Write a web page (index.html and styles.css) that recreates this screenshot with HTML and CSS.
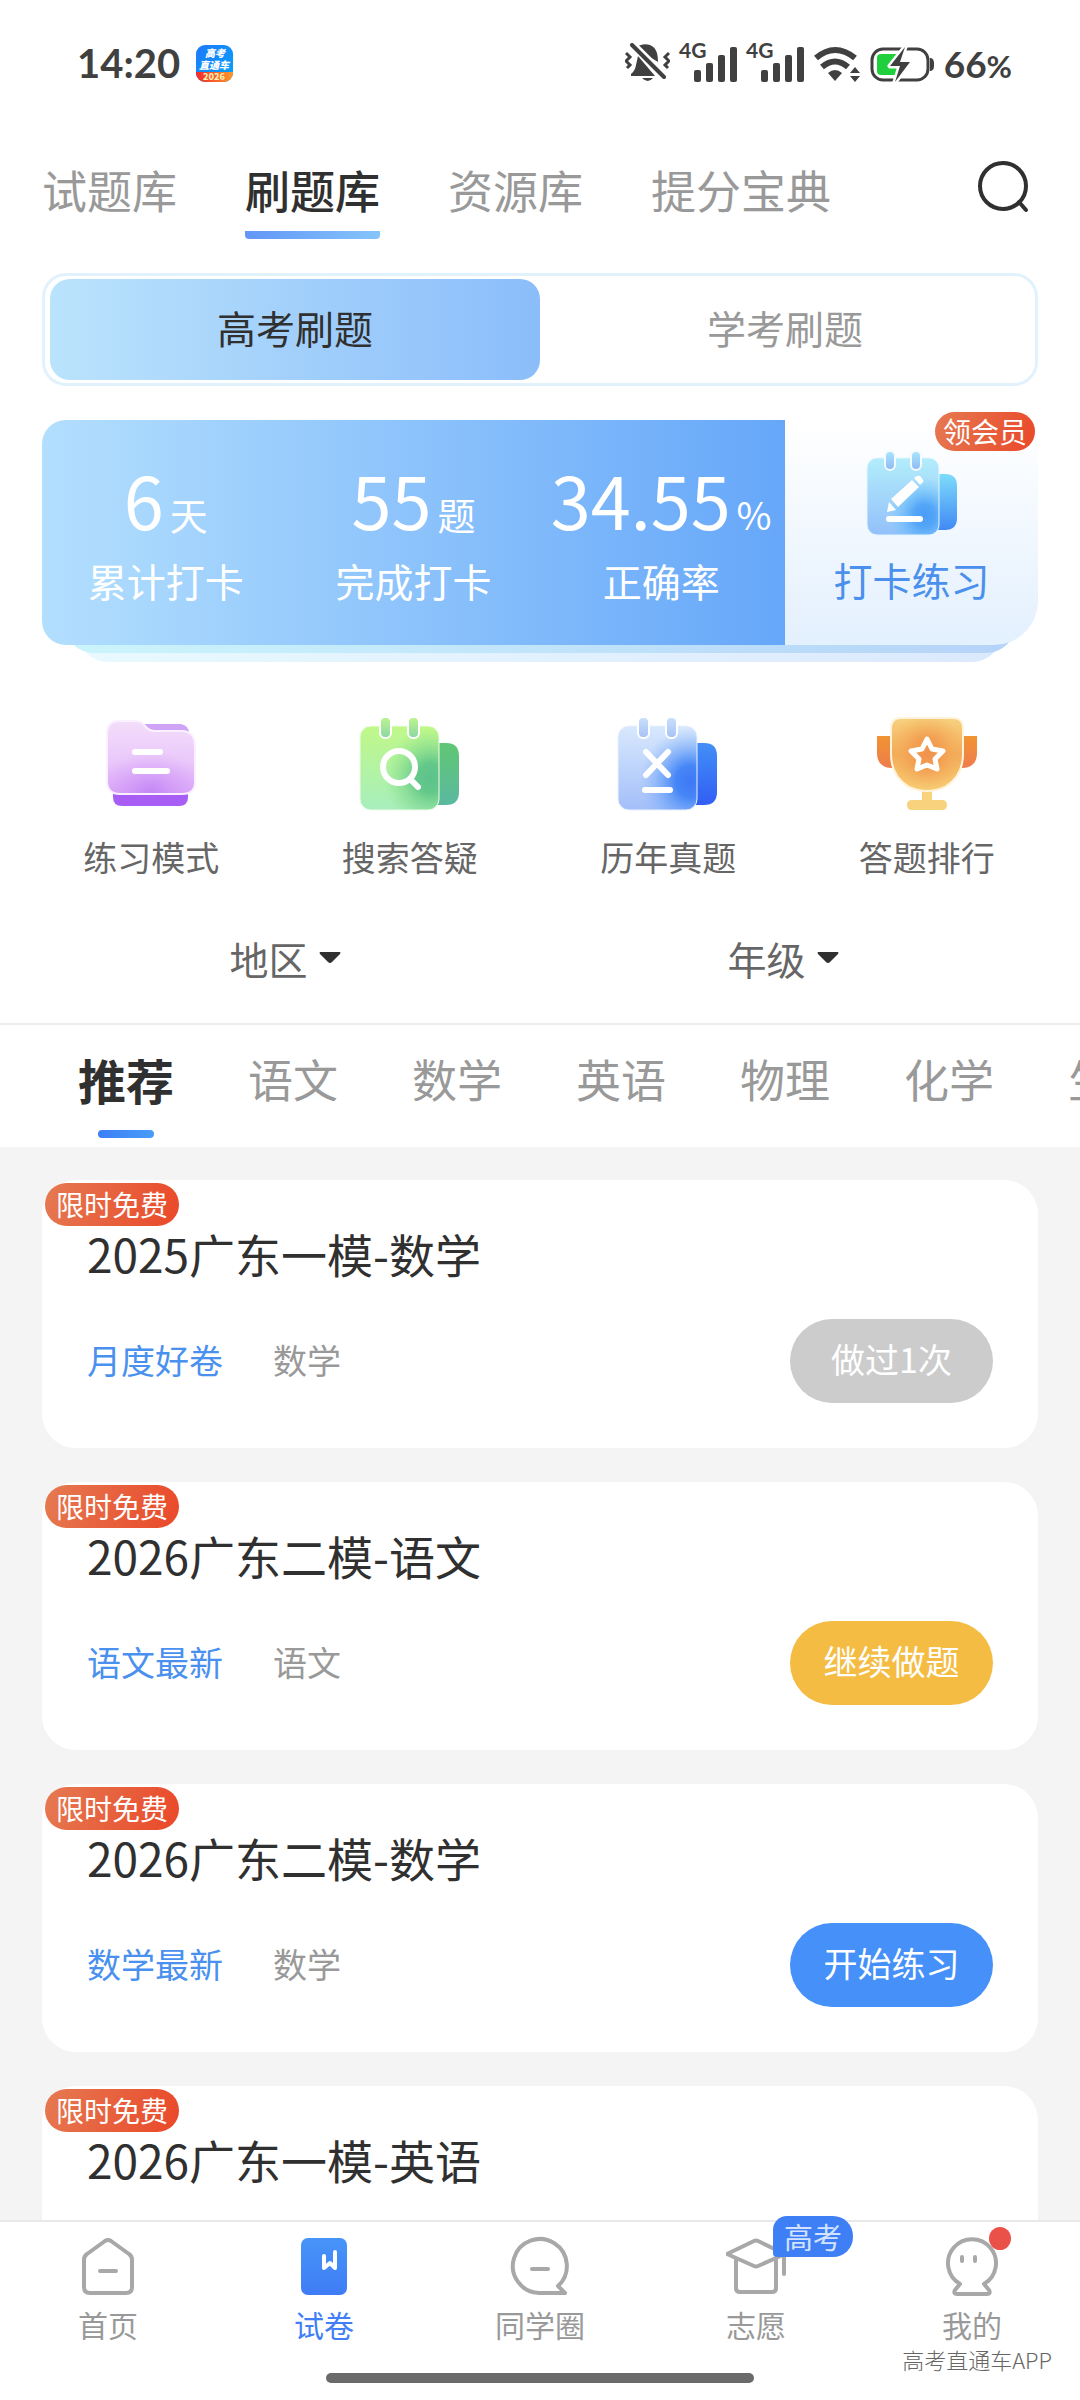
FILE: index.html
```html
<!DOCTYPE html>
<html lang="zh-CN">

<head>
    <meta charset="UTF-8">
    <meta name="viewport" content="width=device-width, initial-scale=1.0">
    <title>高考直通车</title>
    <link rel="stylesheet" href="styles.css">
</head>

<body>
    <div class="status-bar">
        <div class="status-left">
            <span class="clock">14:20</span>
            <svg class="app-logo" width="37" height="37" viewBox="0 0 37 37">
                <defs>
                    <linearGradient id="logoBlue" x1="0" y1="0" x2="1" y2="1">
                        <stop offset="0" stop-color="#1f78fb" />
                        <stop offset="1" stop-color="#04a4fb" />
                    </linearGradient>
                    <linearGradient id="logoRed">
                        <stop offset="0" stop-color="#f5282c" />
                        <stop offset="1" stop-color="#fb9a2a" />
                    </linearGradient>
                    <clipPath id="logoClip"><rect width="37" height="37" rx="9" /></clipPath>
                </defs>
                <g clip-path="url(#logoClip)">
                    <rect width="37" height="37" fill="url(#logoBlue)" />
                    <rect y="27" width="37" height="10" fill="url(#logoRed)" />
                </g>
                <g fill="#fff" font-weight="900" text-anchor="middle">
                    <text x="19" y="12" font-size="10" font-style="italic">高考</text>
                    <text x="18" y="24" font-size="10" font-style="italic">直通车</text>
                    <text x="18" y="35" font-size="9" fill="#ffeeb0">2026</text>
                </g>
            </svg>
        </div>
        <div class="status-right">
            <svg width="45" height="40" viewBox="0 0 45 40">
                <path d="M10 5C18-1 29 0 32 10q1 4 1 9zM13 13L30 33H6v-2q4-3 5-9zM17 35h11q-5 6-11 0z" fill="#404040" />
                <path d="M8 2L40 34" stroke="#fff" stroke-width="8" />
                <path d="M7 2L39 34" stroke="#404040" stroke-width="4" stroke-linecap="round" />
                <path d="M1 10l4 4-4 4 4 4-3 3M44 10l-4 4 4 4-4 4 3 3" fill="none" stroke="#404040" stroke-width="3" />
            </svg>
            <svg class="signal" width="58" height="40" viewBox="0 0 58 40">
                <text x="0" y="15" font-size="21">4G</text>
                <rect x="15" y="27" width="7" height="12" rx="2" />
                <rect x="27" y="20" width="7" height="19" rx="2" />
                <rect x="39" y="12" width="7" height="27" rx="2" />
                <rect x="51" y="4" width="7" height="35" rx="2" />
            </svg>
            <svg class="signal" width="58" height="40" viewBox="0 0 58 40">
                <text x="0" y="15" font-size="21">4G</text>
                <rect x="15" y="27" width="7" height="12" rx="2" />
                <rect x="27" y="20" width="7" height="19" rx="2" />
                <rect x="39" y="12" width="7" height="27" rx="2" />
                <rect x="51" y="4" width="7" height="35" rx="2" />
            </svg>
            <svg width="48" height="40" viewBox="0 0 48 40">
                <path d="M3 15Q22-1 42 15M9 24Q22 13 35 24" fill="none" stroke="#404040" stroke-width="6" />
                <path d="M15 30q7-6 14 0l-7 8z" fill="#404040" />
                <path d="M42 24l5 6H37zM42 39l5-6H37z" fill="#404040" />
            </svg>
            <svg width="65" height="40" viewBox="0 0 65 40">
                <rect x="2" y="6" width="56" height="31" rx="11" fill="none" stroke="#404040" stroke-width="3" />
                <path d="M11 11h16v21H11q-4 0-4-4V15q0-4 4-4z" fill="#1fd03c" />
                <path d="M60 15h1q3 1 3 5v3q0 4-3 5h-1z" fill="#404040" />
                <path d="M35 4L20 23h10l-5 16 15-20H30z" fill="#404040" stroke="#fff" stroke-width="5" stroke-linejoin="round" paint-order="stroke" />
            </svg>
            <span class="battery-level">66<small>%</small></span>
        </div>
    </div>

    <nav class="top-tabs">
        <a class="top-tab" href="#">试题库</a>
        <a class="top-tab active" href="#">刷题库</a>
        <a class="top-tab" href="#">资源库</a>
        <a class="top-tab" href="#">提分宝典</a>
        <button class="search-button" aria-label="搜索">
            <svg width="54" height="54" viewBox="0 0 54 54" fill="none" stroke="#303030" stroke-width="4" stroke-linecap="round">
                <circle cx="27" cy="26" r="23" />
                <path d="M43 42l7 8" />
            </svg>
        </button>
    </nav>

    <div class="segment">
        <button class="segment-item active">高考刷题</button>
        <button class="segment-item">学考刷题</button>
    </div>

    <section class="stats">
        <div class="stats-card">
            <div class="stats-numbers">
                <div class="stat">
                    <div class="stat-value">6<small>天</small></div>
                    <div class="stat-label">累计打卡</div>
                </div>
                <div class="stat">
                    <div class="stat-value">55<small>题</small></div>
                    <div class="stat-label">完成打卡</div>
                </div>
                <div class="stat">
                    <div class="stat-value">34.55<small>%</small></div>
                    <div class="stat-label">正确率</div>
                </div>
            </div>
            <a class="punch" href="#">
                <svg width="92" height="86" viewBox="-1 -1 92 86">
                    <defs>
                        <linearGradient id="punchBack" x1="0" y1="0" x2="0" y2="1">
                            <stop offset="0" stop-color="#7ddcfb" />
                            <stop offset="1" stop-color="#4189f5" />
                        </linearGradient>
                        <linearGradient id="punchFront" x1="0" y1="0" x2="0" y2="1">
                            <stop offset="0" stop-color="#b2edfb" />
                            <stop offset="1" stop-color="#93c0fa" />
                        </linearGradient>
                        <radialGradient id="punchGlow" cx="0.8" cy="0.75" r="0.5">
                            <stop offset="0" stop-color="#4a9cf8" />
                            <stop offset="0.3" stop-color="#54a6f8" />
                            <stop offset="1" stop-color="#72cdfb" stop-opacity="0" />
                        </radialGradient>
                        <linearGradient id="punchRing" x1="0" y1="0" x2="0" y2="1">
                            <stop offset="0" stop-color="#a9e8fb" />
                            <stop offset="1" stop-color="#8fb8f4" />
                        </linearGradient>
                    </defs>
                    <path d="M66 23h12q12 0 12 12v32q0 12-12 12H66z" fill="url(#punchBack)" />
                    <rect y="7" width="72" height="77" rx="10" fill="url(#punchFront)" />
                    <rect y="7" width="72" height="77" rx="10" fill="url(#punchGlow)" stroke="#e4f6fe" stroke-width="1" />
                    <g fill="url(#punchRing)" stroke="#f4fbff" stroke-width="2">
                        <rect x="18" y="0" width="10" height="19" rx="5" />
                        <rect x="44" y="0" width="10" height="19" rx="5" />
                    </g>
                    <path d="M20 61l2-10 7 8zM24 48L45 29l7 7-21 20zM47 27l3-2q2-1 4 1l2 3q1 2-1 3l-2 2z" fill="#fff" />
                    <path d="M22 68h31" stroke="#fff" stroke-width="6" stroke-linecap="round" />
                </svg>
                <span class="punch-label">打卡练习</span>
                <span class="badge vip-badge">领会员</span>
            </a>
        </div>
    </section>

    <nav class="features">
        <a class="feature" href="#">
            <svg width="104" height="100" viewBox="-8 -7 104 100">
                <defs>
                    <linearGradient id="folderFront" x1="0" y1="0" x2="0" y2="1">
                        <stop offset="0" stop-color="#f3def9" />
                        <stop offset="0.55" stop-color="#eac8fb" />
                        <stop offset="1" stop-color="#d9a6f8" />
                    </linearGradient>
                    <radialGradient id="folderGlow" cx="0.5" cy="1" r="0.6">
                        <stop offset="0" stop-color="#c285f6" />
                        <stop offset="1" stop-color="#d8a0f8" stop-opacity="0" />
                    </radialGradient>
                </defs>
                <path d="M36 3h38q8 2 8 9H40z" fill="#cfa4f7" />
                <path d="M6 68h75v8q0 9-9 9H15q-9 0-9-9z" fill="#a85df5" />
                <path d="M12 0h16q6 0 9 4l3 3q3 3 7 3h29q12 1 12 15v36q0 12-13 12H13Q0 73 0 60V13Q0 0 12 0z" fill="url(#folderFront)" />
                <path d="M12 0h16q6 0 9 4l3 3q3 3 7 3h29q12 1 12 15v36q0 12-13 12H13Q0 73 0 60V13Q0 0 12 0z" fill="url(#folderGlow)" stroke="#fbf0ff" stroke-width="2" />
                <path d="M28 31h25M28 50h32" stroke="#fff" stroke-width="6" stroke-linecap="round" />
            </svg>
            <span>练习模式</span>
        </a>
        <a class="feature" href="#">
            <svg width="104" height="100" viewBox="-2 -4 104 100">
                <defs>
                    <linearGradient id="searchBack" x1="0" y1="0" x2="0" y2="1">
                        <stop offset="0" stop-color="#60c673" />
                        <stop offset="1" stop-color="#5bb9a0" />
                    </linearGradient>
                    <linearGradient id="searchFront" x1="0" y1="0" x2="0" y2="1">
                        <stop offset="0" stop-color="#c0f888" />
                        <stop offset="1" stop-color="#a7eebd" />
                    </linearGradient>
                    <radialGradient id="searchGlow" cx="0.9" cy="0.62" r="0.6">
                        <stop offset="0" stop-color="#5cc28b" />
                        <stop offset="0.3" stop-color="#64c88a" />
                        <stop offset="1" stop-color="#8be088" stop-opacity="0" />
                    </radialGradient>
                    <linearGradient id="searchRing" x1="0" y1="0" x2="0" y2="1">
                        <stop offset="0" stop-color="#bdf58d" />
                        <stop offset="1" stop-color="#8bd6a5" />
                    </linearGradient>
                </defs>
                <path d="M74 25h12q13 0 13 13v36q0 13-13 13H74z" fill="url(#searchBack)" />
                <rect y="8" width="79" height="84" rx="11" fill="url(#searchFront)" />
                <rect y="8" width="79" height="84" rx="11" fill="url(#searchGlow)" stroke="#eefde6" stroke-width="1" />
                <g fill="url(#searchRing)" stroke="#fff" stroke-width="2">
                    <rect x="20" y="-1" width="11" height="21" rx="5" />
                    <rect x="48" y="-1" width="11" height="21" rx="5" />
                </g>
                <circle cx="39" cy="49" r="16" fill="none" stroke="#fff" stroke-width="6" />
                <path d="M50 61l8 8" stroke="#fff" stroke-width="6" stroke-linecap="round" />
            </svg>
            <span>搜索答疑</span>
        </a>
        <a class="feature" href="#">
            <svg width="104" height="100" viewBox="-2 -4 104 100">
                <defs>
                    <linearGradient id="examBack" x1="0" y1="0" x2="0" y2="1">
                        <stop offset="0" stop-color="#438ff7" />
                        <stop offset="1" stop-color="#315ef4" />
                    </linearGradient>
                    <linearGradient id="examFront" x1="0" y1="0" x2="0" y2="1">
                        <stop offset="0" stop-color="#d8e8fd" />
                        <stop offset="1" stop-color="#a3bff9" />
                    </linearGradient>
                    <radialGradient id="examGlow" cx="0.92" cy="0.66" r="0.64">
                        <stop offset="0" stop-color="#3f78f6" />
                        <stop offset="0.3" stop-color="#4686f7" />
                        <stop offset="1" stop-color="#7fb5fa" stop-opacity="0" />
                    </radialGradient>
                    <linearGradient id="examRing" x1="0" y1="0" x2="0" y2="1">
                        <stop offset="0" stop-color="#cbe1fc" />
                        <stop offset="1" stop-color="#a5c1f5" />
                    </linearGradient>
                </defs>
                <path d="M74 25h12q13 0 13 13v36q0 13-13 13H74z" fill="url(#examBack)" />
                <rect y="8" width="79" height="84" rx="11" fill="url(#examFront)" />
                <rect y="8" width="79" height="84" rx="11" fill="url(#examGlow)" stroke="#eaf2fe" stroke-width="1" />
                <g fill="url(#examRing)" stroke="#fff" stroke-width="2">
                    <rect x="20" y="-1" width="11" height="21" rx="5" />
                    <rect x="48" y="-1" width="11" height="21" rx="5" />
                </g>
                <path d="M28 34l22 23M50 34L28 57M27 72h25" stroke="#fff" stroke-width="6" stroke-linecap="round" />
            </svg>
            <span>历年真题</span>
        </a>
        <a class="feature" href="#">
            <svg width="104" height="100" viewBox="-2 -4 104 100">
                <defs>
                    <linearGradient id="cupHandle" x1="0" y1="0" x2="0" y2="1">
                        <stop offset="0" stop-color="#f19431" />
                        <stop offset="1" stop-color="#ee7c4d" />
                    </linearGradient>
                    <linearGradient id="cup" x1="0" y1="0" x2="0" y2="1">
                        <stop offset="0" stop-color="#f7d280" />
                        <stop offset="0.5" stop-color="#f3aa58" />
                        <stop offset="1" stop-color="#f8d279" />
                    </linearGradient>
                    <radialGradient id="cupGlow" cx="0.5" cy="0.48" r="0.55">
                        <stop offset="0" stop-color="#f0924c" />
                        <stop offset="0.4" stop-color="#f2a052" />
                        <stop offset="1" stop-color="#f5b860" stop-opacity="0" />
                    </radialGradient>
                </defs>
                <path d="M0 18h20v32h-6Q0 49 0 35zM100 18H80v32h6q14-1 14-15z" fill="url(#cupHandle)" />
                <path d="M45 70h10v12h10q5 0 5 5t-5 5H35q-5 0-5-5t5-5h10z" fill="#f8d27c" />
                <path d="M24 0h52q10 0 10 10v26q0 22-18 33-18 8-36 0Q14 58 14 36V10Q14 0 24 0z" fill="url(#cup)" />
                <path d="M24 0h52q10 0 10 10v26q0 22-18 33-18 8-36 0Q14 58 14 36V10Q14 0 24 0z" fill="url(#cupGlow)" stroke="#fff3db" stroke-width="2" />
                <path d="M50 21l5 10 11 2-8 8 2 10-10-4-10 4 2-10-8-8 11-2z" fill="none" stroke="#fff" stroke-width="5" stroke-linejoin="round" />
            </svg>
            <span>答题排行</span>
        </a>
    </nav>

    <div class="filters">
        <label class="filter">
            <select aria-label="地区"><option>地区</option></select>
            <svg width="22" height="12" viewBox="0 0 22 12"><path d="M1 0h20q1 1 0 2l-8 8q-2 2-4 0L1 2q-1-1 0-2z" fill="#303030" /></svg>
        </label>
        <label class="filter">
            <select aria-label="年级"><option>年级</option></select>
            <svg width="22" height="12" viewBox="0 0 22 12"><path d="M1 0h20q1 1 0 2l-8 8q-2 2-4 0L1 2q-1-1 0-2z" fill="#303030" /></svg>
        </label>
    </div>

    <nav class="subjects">
        <a class="subject active" href="#">推荐</a>
        <a class="subject" href="#">语文</a>
        <a class="subject" href="#">数学</a>
        <a class="subject" href="#">英语</a>
        <a class="subject" href="#">物理</a>
        <a class="subject" href="#">化学</a>
        <a class="subject" href="#">生物</a>
    </nav>

    <main class="papers">
        <article class="paper">
            <span class="badge free-badge">限时免费</span>
            <h2>2025广东一模-数学</h2>
            <div class="paper-row">
                <span class="tag">月度好卷</span>
                <span class="course">数学</span>
                <button class="paper-button done">做过1次</button>
            </div>
        </article>
        <article class="paper">
            <span class="badge free-badge">限时免费</span>
            <h2>2026广东二模-语文</h2>
            <div class="paper-row">
                <span class="tag">语文最新</span>
                <span class="course">语文</span>
                <button class="paper-button continue">继续做题</button>
            </div>
        </article>
        <article class="paper">
            <span class="badge free-badge">限时免费</span>
            <h2>2026广东二模-数学</h2>
            <div class="paper-row">
                <span class="tag">数学最新</span>
                <span class="course">数学</span>
                <button class="paper-button start">开始练习</button>
            </div>
        </article>
        <article class="paper">
            <span class="badge free-badge">限时免费</span>
            <h2>2026广东一模-英语</h2>
        </article>
    </main>

    <footer class="bottom">
        <nav class="bottom-nav">
            <a class="nav-item" href="#">
                <svg width="60" height="60" viewBox="0 0 60 60">
                    <path d="M27 5q3-2 6 0l18 13q3 2 3 6v27q0 6-6 6H12q-6 0-6-6V24q0-4 3-6zM22 35h16" />
                </svg>
                <span>首页</span>
            </a>
            <a class="nav-item active" href="#">
                <svg width="60" height="60" viewBox="0 0 60 60">
                    <defs>
                        <linearGradient id="book" x1="0" y1="0" x2="0" y2="1">
                            <stop offset="0" stop-color="#4795f8" />
                            <stop offset="1" stop-color="#3f7cf6" />
                        </linearGradient>
                    </defs>
                    <rect x="7" y="2" width="46" height="57" rx="7" fill="url(#book)" stroke="none" />
                    <path class="bookmark" d="M30 20v12l6-5 5 5V16" />
                </svg>
                <span>试卷</span>
            </a>
            <a class="nav-item" href="#">
                <svg width="60" height="60" viewBox="0 0 60 60">
                    <path d="M55 57H29A27 27 0 1 1 48 50zM22 33h16" />
                </svg>
                <span>同学圈</span>
            </a>
            <a class="nav-item" href="#">
                <svg width="60" height="60" viewBox="0 0 60 60">
                    <path d="M1 18L28 5q2-1 4 0l27 13-27 12q-2 1-4 0zM10 24v28q0 4 4 4h32q4 0 4-4V24M58 20v18" />
                </svg>
                <span>志愿</span>
                <span class="nav-badge">高考</span>
            </a>
            <a class="nav-item" href="#">
                <svg width="60" height="60" viewBox="0 0 60 60">
                    <path d="M18 48A24 24 0 1 1 42 48l5 6q2 4-2 4H15q-4 0-2-4zM20 21v4M33 21v4" />
                </svg>
                <span>我的</span>
                <span class="nav-dot"></span>
            </a>
        </nav>
        <div class="home-bar"></div>
        <div class="watermark">高考直通车APP</div>
    </footer>
</body>

</html>
```

FILE: styles.css
```css
* {
    box-sizing: border-box;
}

body {
    margin: 0;
    height: 100vh;
    display: flex;
    flex-direction: column;
    overflow: hidden;
    background: #fff;
    color: #303030;
    font-family: "Noto Sans CJK SC", sans-serif;
}

a {
    color: inherit;
    text-decoration: none;
}

button,
select {
    padding: 0;
    border: none;
    background: none;
    color: inherit;
    font-family: inherit;
}

svg {
    display: block;
    flex-shrink: 0;
}

/* Status bar */
.status-bar {
    display: flex;
    justify-content: space-between;
    align-items: center;
    height: 126px;
    padding: 0 68px 0 77px;
    font-family: Lato, sans-serif;
    font-weight: bold;
    color: #404040;
}

.status-left,
.status-right {
    display: flex;
    align-items: center;
}

.status-left {
    gap: 16px;
}

.status-right {
    gap: 9px;
}

.clock {
    font-size: 40px;
}

.app-logo {
    font-family: "Noto Sans CJK SC", sans-serif;
}

.signal {
    fill: #404040;
    overflow: visible;
}

.battery-level {
    font-size: 37px;
}

.battery-level small {
    font-size: 31px;
}

/* Top tabs */
.top-tabs {
    display: flex;
    align-items: flex-start;
    gap: 68px;
    padding: 34px 50px 34px 42px;
}

.top-tab {
    padding-bottom: 19px;
    font-size: 45px;
    line-height: 60px;
    color: #999;
}

.top-tab.active {
    padding-bottom: 11px;
    border-bottom: 8px solid transparent;
    font-weight: 500;
    color: #303030;
    background: linear-gradient(90deg, #6296f7, #85c5fb) bottom / 100% 8px no-repeat border-box;
    border-radius: 4px;
}

.search-button {
    margin-left: auto;
}

/* Segment */
.segment {
    display: flex;
    margin: 0 42px;
    padding: 3px 5px;
    border: 3px solid #e1f2fd;
    border-radius: 24px;
}

.segment-item {
    flex: 1;
    height: 101px;
    padding-bottom: 5px;
    border-radius: 20px;
    font-size: 39px;
    color: #999;
}

.segment-item.active {
    background: linear-gradient(90deg, #bae3fc, #8bbdfa);
    color: #303030;
}

/* Stats card with two sheets peeking out below */
.stats {
    position: relative;
    z-index: 0;
    margin: 34px 42px 0;
}

.stats::before,
.stats::after {
    content: "";
    position: absolute;
    height: 60px;
    border-radius: 30px;
}

.stats::before {
    left: 36px;
    right: 36px;
    bottom: -17px;
    z-index: -2;
    background: linear-gradient(90deg, #e8f9ff, #dce9fd);
}

.stats::after {
    left: 22px;
    right: 22px;
    bottom: -8px;
    z-index: -1;
    background: linear-gradient(90deg, #cbf5fc, #b5d3f8);
}

.stats-card {
    display: flex;
    height: 225px;
}

.stats-numbers {
    flex: 1;
    display: flex;
    border-radius: 24px 0 0 24px;
    background: linear-gradient(90deg, #b3dffe, #66a7f9);
    color: #fff;
}

.stat {
    flex: 1;
    text-align: center;
}

.stat-value {
    padding-top: 28px;
    font-size: 72px;
    line-height: 102px;
    white-space: nowrap;
}

.stat-value small {
    margin-left: 6px;
    font-size: 38px;
    line-height: 1;
}

.stat-label,
.punch-label {
    font-size: 39px;
    line-height: 60px;
}

.punch {
    position: relative;
    width: 253px;
    display: flex;
    flex-direction: column;
    align-items: center;
    gap: 13px;
    padding-top: 30px;
    border-radius: 0 24px 44px 0;
    background: linear-gradient(#fff, #e3f0fe);
    color: #4a90ec;
}

.badge {
    position: absolute;
    border-radius: 22px;
    background: linear-gradient(110deg, #e57a52, #ea4829);
    color: #fff;
    font-size: 28px;
    text-align: center;
}

.vip-badge {
    top: -8px;
    right: 3px;
    width: 100px;
    line-height: 39px;
}

/* Features */
.features {
    display: flex;
    padding: 69px 24px 0 22px;
}

.feature {
    flex: 1;
    display: flex;
    flex-direction: column;
    align-items: center;
    gap: 18px;
    font-size: 34px;
    line-height: 50px;
    color: #666;
}

/* Filters */
.filters {
    display: flex;
    padding: 46px 42px 35px;
    border-bottom: 2px solid #ececec;
}

.filter {
    flex: 1;
    display: flex;
    justify-content: center;
    align-items: center;
    gap: 10px;
    padding-right: 12px;
}

.filter select {
    appearance: none;
    height: 60px;
    font-size: 39px;
    color: #666;
}

/* Subjects */
.subjects {
    display: flex;
    gap: 74px;
    height: 122px;
    padding: 24px 0 9px 78px;
    overflow: hidden;
}

.subject {
    flex-shrink: 0;
    font-size: 45px;
    line-height: 60px;
    color: #999;
}

.subject.active {
    font-size: 48px;
    font-weight: bold;
    color: #303030;
}

.subject.active::after {
    content: "";
    display: block;
    width: 56px;
    height: 8px;
    margin: 21px auto 0;
    border-radius: 4px;
    background: linear-gradient(90deg, #3c7ef6, #489df9);
}

/* Paper list */
.papers {
    flex: 1;
    min-height: 0;
    display: flex;
    flex-direction: column;
    gap: 34px;
    padding: 33px 42px 0;
    overflow: hidden;
    background: #f4f4f4;
}

.paper {
    position: relative;
    flex-shrink: 0;
    min-height: 268px;
    padding: 43px 45px 45px;
    border-radius: 34px;
    background: #fff;
}

.free-badge {
    top: 3px;
    left: 3px;
    width: 134px;
    line-height: 43px;
}

.paper h2 {
    margin: 0 0 36px;
    font-size: 46px;
    font-weight: normal;
    line-height: 60px;
}

.paper-row {
    display: flex;
    align-items: center;
    gap: 50px;
    font-size: 34px;
}

.tag,
.course {
    padding-bottom: 4px;
}

.tag {
    color: #4a90ee;
}

.course {
    color: #999;
}

.paper-button {
    width: 203px;
    height: 84px;
    margin-left: auto;
    padding-bottom: 5px;
    border-radius: 42px;
    font-size: 34px;
    color: #fff;
}

.done {
    background: #ccc;
}

.continue {
    background: #f5bc43;
}

.start {
    background: #4591f9;
}

/* Bottom navigation */
.bottom {
    position: relative;
    height: 180px;
    border-top: 2px solid #e9e9e9;
    background: #fff;
}

.bottom-nav {
    display: flex;
}

.nav-item {
    position: relative;
    flex: 1;
    display: flex;
    flex-direction: column;
    align-items: center;
    gap: 6px;
    padding-top: 14px;
    font-size: 30px;
    line-height: 44px;
    color: #999;
}

.nav-item svg {
    fill: none;
    stroke: #a8a8a8;
    stroke-width: 4;
    stroke-linecap: round;
    stroke-linejoin: round;
}

.nav-item.active {
    color: #427ff6;
}

.nav-item .bookmark {
    stroke: #fff;
}

.nav-badge {
    position: absolute;
    top: -6px;
    left: 125px;
    width: 80px;
    border-radius: 14px 20px 20px 4px;
    background: #3f7ff6;
    color: #d3e3ff;
    font-size: 29px;
    line-height: 41px;
    text-align: center;
}

.nav-dot {
    position: absolute;
    top: 5px;
    left: 125px;
    width: 22px;
    height: 23px;
    border-radius: 50%;
    background: #ea5149;
}

.home-bar {
    width: 428px;
    height: 10px;
    margin: 27px auto 0;
    border-radius: 5px;
    background: #6a6a6a;
}

.watermark {
    position: absolute;
    right: 28px;
    bottom: 25px;
    font-size: 22px;
    font-weight: 300;
    line-height: 32px;
    color: #666;
}
```
